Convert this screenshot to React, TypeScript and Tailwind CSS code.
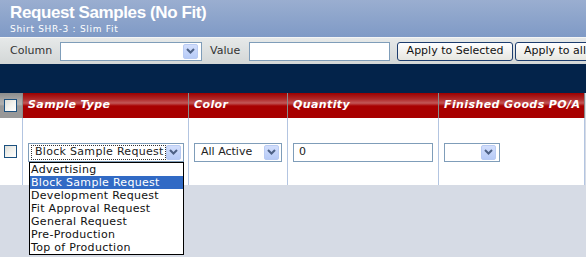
import React from "react";

const Chevron = () => (
  <svg width="9" height="6" viewBox="0 0 9 6" className="block">
    <path d="M1 1 L4.5 4.5 L8 1" fill="none" stroke="#4d6185" strokeWidth="2" />
  </svg>
);

const ArrowBtn = ({ h = 15 }: { h?: number }) => (
  <div
    className="w-[15px] shrink-0 flex items-center justify-center rounded-[2px] border border-[#b9cbf3] bg-gradient-to-b from-[#d2defc] to-[#b7cbf7]"
    style={{ height: h }}
  >
    <Chevron />
  </div>
);

const Check = () => (
  <div className="w-[13px] h-[13px] border border-[#1c5180] bg-gradient-to-br from-[#dcdcd6] via-[#f2f2ee] to-white" />
);

const items = [
  "Advertising",
  "Block Sample Request",
  "Development Request",
  "Fit Approval Request",
  "General Request",
  "Pre-Production",
  "Top of Production",
];

export default function App() {
  return (
    <div className="w-[586px] h-[257px] overflow-hidden bg-[#d6dbe5] font-['DejaVu_Sans',sans-serif] text-[11px] text-[#222]">
      {/* Title header */}
      <div className="h-[37px] bg-gradient-to-b from-[#9aaed0] to-[#7f9ac6] pl-[10px] pt-[3px]">
        <div className="font-['Liberation_Sans',sans-serif] font-bold text-[17px] tracking-[-0.4px] leading-[19px] text-white">
          Request Samples (No Fit)
        </div>
        <div className="text-[9px] leading-[11px] mt-[2px] text-white tracking-[0.7px]">
          Shirt SHR-3 : Slim Fit
        </div>
      </div>
      {/* Toolbar */}
      <div className="h-[27px] border-t border-[#f4f5f5] bg-gradient-to-b from-[#e6e9e9] to-[#d3d7d7] flex items-center whitespace-nowrap text-[#333]">
        <span className="ml-[10px] w-[50px] shrink-0">Column</span>
        <div className="w-[142px] h-[19px] shrink-0 border border-[#7f9db9] bg-white flex items-center justify-end pr-[3px]">
          <ArrowBtn h={15} />
        </div>
        <span className="ml-[8px] w-[39px] shrink-0">Value</span>
        <div className="w-[141px] h-[19px] shrink-0 border border-[#7f9db9] bg-white" />
        <div className="ml-[7px] w-[116px] h-[19px] rounded-[3px] border border-[#1d3d6e] bg-gradient-to-b from-white to-[#e6e6e0] flex items-center justify-center text-[#111] shrink-0">
          Apply to Selected
        </div>
        <div className="ml-[2px] w-[90px] h-[19px] rounded-[3px] border border-[#1d3d6e] bg-gradient-to-b from-white to-[#e6e6e0] flex items-center pl-[8px] text-[#111] shrink-0">
          Apply to all
        </div>
      </div>
      {/* Navy band */}
      <div className="h-[29px] bg-[#03234a]" />
      {/* Table header */}
      <div className="flex h-[25px] w-[585px] border-r border-[#888]">
        <div className="w-[22px] shrink-0 flex items-center pl-[4px] bg-[linear-gradient(to_bottom,#8c8c8c_0%,#a8a8a8_30%,#b0b0b0_45%,#989898_52%,#989898_100%)]">
          <Check />
        </div>
        {[
          ["Sample Type", "w-[166px]"],
          ["Color", "w-[99px]"],
          ["Quantity", "w-[151px]"],
          ["Finished Goods PO/A", "w-[146px]"],
        ].map(([t, w]) => (
          <div
            key={t}
            className={`${w} shrink-0 whitespace-nowrap border-l border-[#8a8a8a] flex items-center pl-[5px] font-bold italic tracking-[0.4px] text-white bg-[linear-gradient(to_bottom,#9c0000_0%,#b02a2a_25%,#c35757_40%,#a80000_52%,#a80000_100%)]`}
          >
            {t}
          </div>
        ))}
      </div>
      {/* Body row */}
      <div className="flex h-[67px] w-[585px] bg-white border-r border-[#b3c5e1]">
        <div className="w-[22px] shrink-0 flex items-center pl-[4px]">
          <Check />
        </div>
        <div className="w-[166px] shrink-0 border-l border-[#b3c5e1] pl-[5px] flex items-center relative">
          <div className="w-[156px] h-[19px] border border-[#7f9db9] flex items-center pl-[2px] pr-[2px] mt-[1px]">
            <div className="flex-1 h-[15px] border border-dotted border-[#333] flex items-center pl-[3px] overflow-hidden whitespace-nowrap tracking-[0.3px]">
              Block Sample Request
            </div>
            <ArrowBtn h={15} />
          </div>
          <div className="absolute left-[6px] top-[44px] w-[155px] border border-black bg-white z-10">
            {items.map((it, i) => (
              <div
                key={it}
                className={`h-[13px] leading-[13px] pl-[1px] whitespace-nowrap tracking-[0.3px] ${
                  i === 1 ? "bg-[#316ac5] text-white" : "text-[#111]"
                }`}
              >
                {it}
              </div>
            ))}
          </div>
        </div>
        <div className="w-[99px] shrink-0 border-l border-[#b3c5e1] pl-[5px] flex items-center">
          <div className="w-[88px] h-[19px] border border-[#7f9db9] flex items-center pl-[6px] pr-[2px] mt-[1px]">
            <span className="flex-1">All Active</span>
            <ArrowBtn h={15} />
          </div>
        </div>
        <div className="w-[151px] shrink-0 border-l border-[#b3c5e1] pl-[5px] flex items-center">
          <div className="w-[140px] h-[19px] border border-[#7f9db9] flex items-center pl-[5px] mt-[1px]">
            0
          </div>
        </div>
        <div className="w-[146px] shrink-0 border-l border-[#b3c5e1] pl-[5px] flex items-center">
          <div className="w-[56px] h-[19px] border border-[#7f9db9] flex items-center justify-end pr-[3px] mt-[1px]">
            <ArrowBtn h={15} />
          </div>
        </div>
      </div>
    </div>
  );
}
